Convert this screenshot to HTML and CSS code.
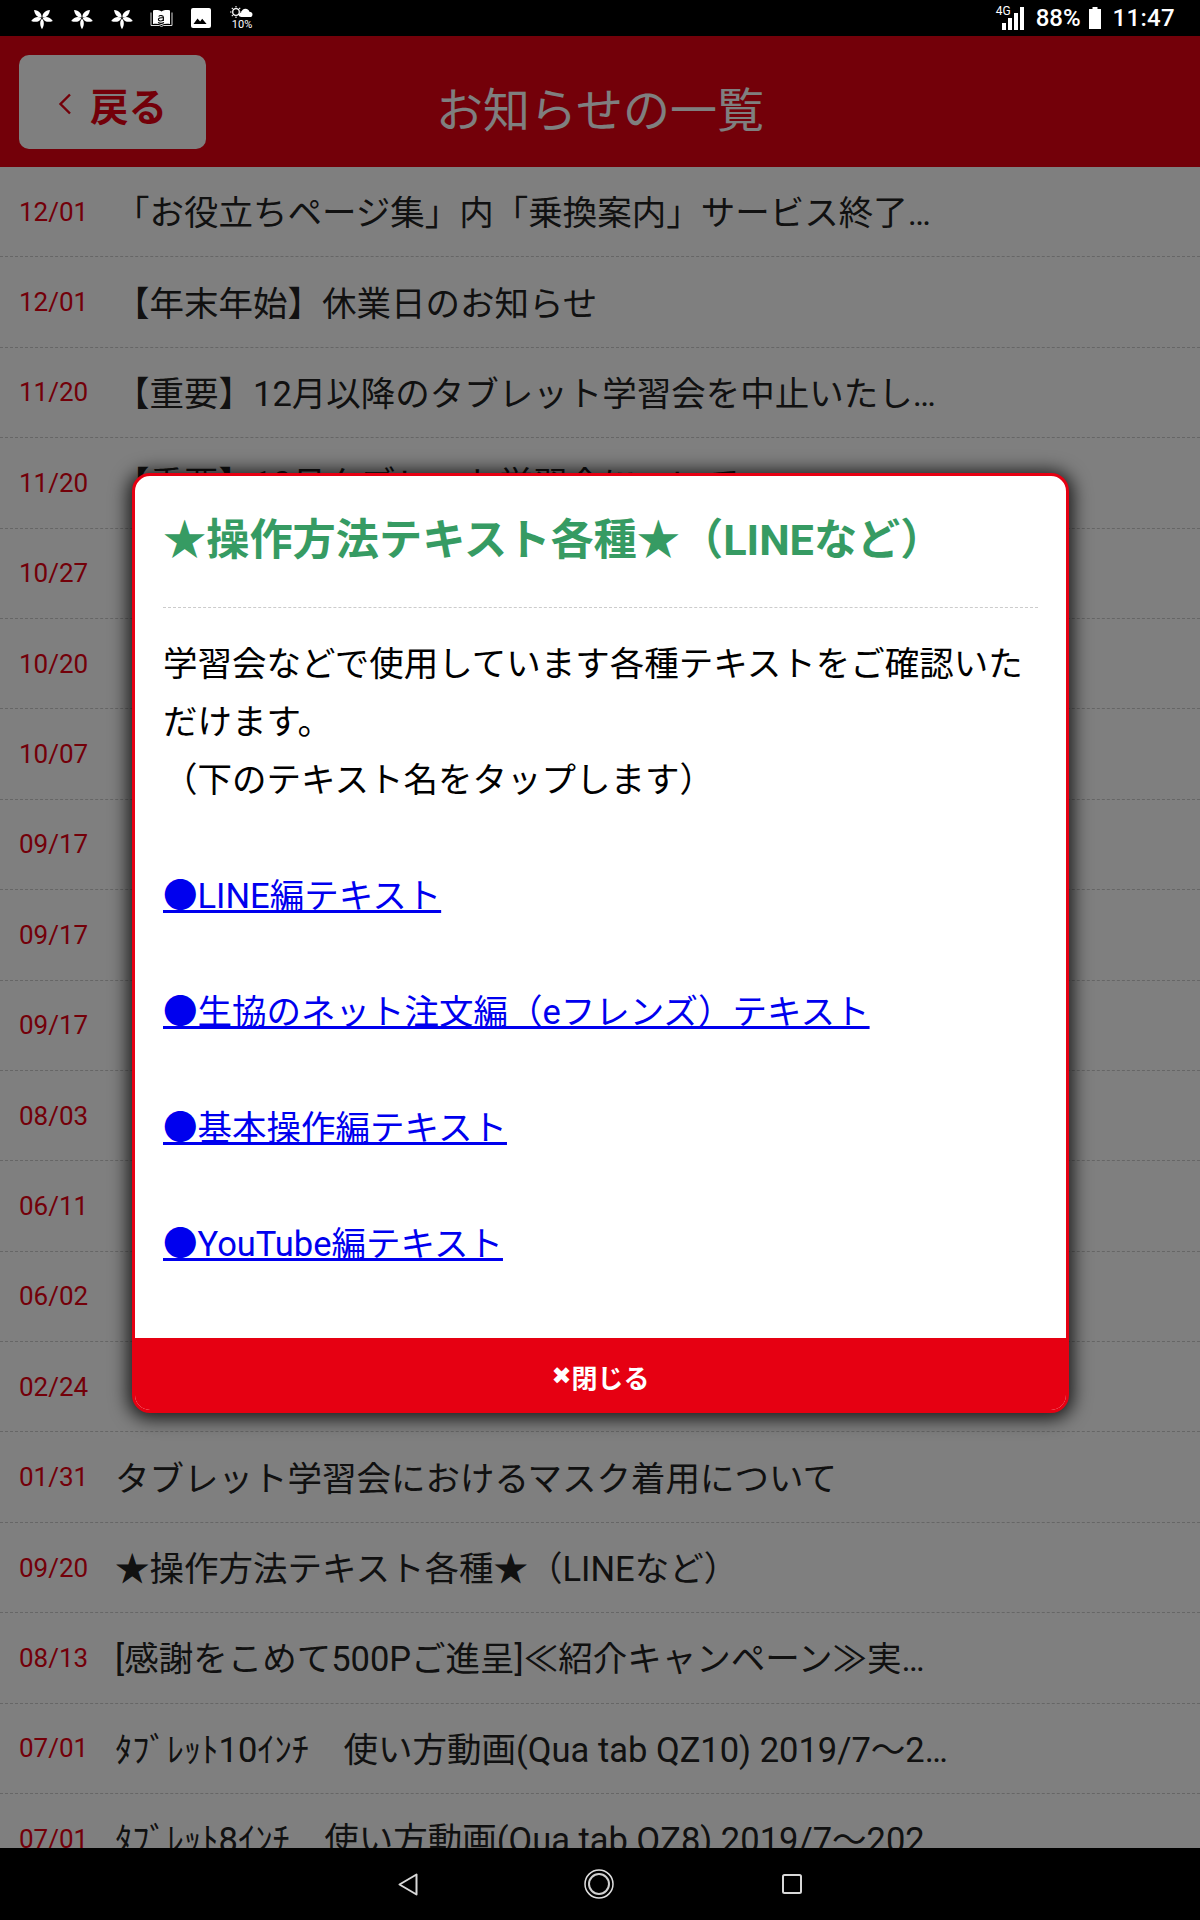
FILE: index.html
```html
<!DOCTYPE html>
<html lang="ja">
<head>
<meta charset="utf-8">
<title>お知らせの一覧</title>
<link rel="stylesheet" href="styles.css">
</head>
<body>
<div class="app">
  <svg class="defs" width="0" height="0">
    <defs>
      <g id="flower-shape" fill="#fff">
        <path id="petal" d="M12 11.300C9 9 9 4.500 12 .8c3 3.700 3 8.200 0 10.500z" transform="rotate(-45 12 12)"/>
        <path d="M12 11.300C9 9 9 4.500 12 .8c3 3.700 3 8.200 0 10.500z" transform="rotate(45 12 12)"/>
        <path d="M12 11.300C9 9 9 4.500 12 .8c3 3.700 3 8.200 0 10.500z" transform="rotate(105 12 12)"/>
        <path d="M12 11.300C9.600 9 9.600 4.500 12 .8c2.400 3.700 2.400 8.200 0 10.500z" transform="rotate(180 12 12)"/>
        <path d="M12 11.300C9 9 9 4.500 12 .8c3 3.700 3 8.200 0 10.500z" transform="rotate(255 12 12)"/>
      </g>
    </defs>
  </svg>
  <div class="statusbar">
    <div class="status-left">
      <svg class="flower" viewBox="0 0 24 24"><use href="#flower-shape"/></svg>
      <svg class="flower" viewBox="0 0 24 24"><use href="#flower-shape"/></svg>
      <svg class="flower" viewBox="0 0 24 24"><use href="#flower-shape"/></svg>
      <svg class="book" viewBox="0 0 23 20"><path d="M1 4.500V17.500h8.500l2 1 2-1H22V4.500" fill="none" stroke="#ddd" stroke-width="1"/><path d="M3 2.500c3-.8 6-.5 8.500 1 2.500-1.500 5.500-1.800 8.500-1V16c-3-.6-6-.3-8.500 1-2.500-1.300-5.500-1.600-8.500-1z" fill="#fff"/><path d="M8.600 8.500c1.200-1.400 4.800-1.300 4.800.8v3.700M13.300 9.800c-3-.3-4.900.3-4.900 1.800 0 1.800 3.400 1.900 4.900 0M8 14.600c1.800.9 4.400.9 6-.1" fill="none" stroke="#000" stroke-width="1.100"/></svg>
      <svg class="picture" viewBox="0 0 20 20"><rect width="20" height="20" rx="2" fill="#fff"/><path d="M2.500 16l4-5.500 2.600 3 2.100-2.800 4.400 5.300z" fill="#000"/></svg>
      <div class="weather">
        <svg class="weather-icon" viewBox="0 0 24 12"><circle cx="6" cy="6" r="3.300" fill="none" stroke="#fff" stroke-width="1.300"/><path d="M6 0v1.500M6 10.500V12M0 6h1.500M10.500 6H12M1.800 1.800l1 1M9.200 9.200l1 1M1.800 10.200l1-1M9.200 2.800l1-1" stroke="#fff" stroke-width="1.100"/><path d="M11.500 11c-1.700 0-2.500-1-2.500-2.200s1-2.200 2.300-2.200c.3-2.400 2-3.900 4.200-3.900 2.100 0 3.500 1.400 3.900 3 1.800 0 3.100 1.100 3.100 2.700S21.400 11 20 11z" fill="#fff"/></svg>
        <span class="weather-text">10%</span>
      </div>
    </div>
    <div class="status-right">
      <div class="signal">
        <span class="network">4G</span>
        <svg class="bars" viewBox="0 0 23 23"><path d="M1 16h4v7H1zM7 11h4v12H7zM13 6h4v17h-4zM19 0h4v23h-4z" fill="#fff"/></svg>
      </div>
      <span class="battery-text">88%</span>
      <svg class="battery" viewBox="0 0 12 22"><path d="M3.500 0h5v2H12v20H0V2h3.500z" fill="#fff"/></svg>
      <span class="clock">11:47</span>
    </div>
  </div>

  <div class="screen">
    <header class="header">
      <div class="header-side">
        <a class="back">
          <svg class="chevron" viewBox="0 0 14 22"><path d="M12 1.500L2.500 11 12 20.500" fill="none" stroke="#e60012" stroke-width="2.400"/></svg>
          <span>戻る</span>
        </a>
      </div>
      <h1 class="header-title">お知らせの一覧</h1>
      <div class="header-side"></div>
    </header>

    <ul class="list">
      <li class="row"><span class="date">12/01</span><span class="subject">「お役立ちページ集」内「乗換案内」サービス終了のお知らせ</span></li>
      <li class="row"><span class="date">12/01</span><span class="subject">【年末年始】休業日のお知らせ</span></li>
      <li class="row"><span class="date">11/20</span><span class="subject">【重要】12月以降のタブレット学習会を中止いたします</span></li>
      <li class="row"><span class="date">11/20</span><span class="subject">【重要】10月タブレット学習会について</span></li>
      <li class="row"><span class="date">10/27</span></li>
      <li class="row"><span class="date">10/20</span></li>
      <li class="row"><span class="date">10/07</span></li>
      <li class="row"><span class="date">09/17</span></li>
      <li class="row"><span class="date">09/17</span></li>
      <li class="row"><span class="date">09/17</span></li>
      <li class="row"><span class="date">08/03</span></li>
      <li class="row"><span class="date">06/11</span></li>
      <li class="row"><span class="date">06/02</span></li>
      <li class="row"><span class="date">02/24</span></li>
      <li class="row"><span class="date">01/31</span><span class="subject">タブレット学習会におけるマスク着用について</span></li>
      <li class="row"><span class="date">09/20</span><span class="subject">★操作方法テキスト各種★（LINEなど）</span></li>
      <li class="row"><span class="date">08/13</span><span class="subject">[感謝をこめて500Pご進呈]≪紹介キャンペーン≫実施中のお知らせ</span></li>
      <li class="row"><span class="date">07/01</span><span class="subject">ﾀﾌﾞﾚｯﾄ10ｲﾝﾁ　使い方動画(Qua tab QZ10) 2019/7～2020/6</span></li>
      <li class="row"><span class="date">07/01</span><span class="subject">ﾀﾌﾞﾚｯﾄ8ｲﾝﾁ　使い方動画(Qua tab QZ8) 2019/7～2020/6</span></li>
    </ul>

    <div class="overlay"></div>

    <div class="modal">
      <div class="modal-body">
        <h2 class="modal-title">★操作方法テキスト各種★（LINEなど）</h2>
        <div class="modal-text">
          <p>学習会などで使用しています各種テキストをご確認いただけます。<br>（下のテキスト名をタップします）</p>
          <p><a class="link">●LINE編テキスト</a></p>
          <p><a class="link">●生協のネット注文編（eフレンズ）テキスト</a></p>
          <p><a class="link">●基本操作編テキスト</a></p>
          <p><a class="link">●YouTube編テキスト</a></p>
        </div>
      </div>
      <div class="modal-close"><span class="close-x">✖</span>閉じる</div>
    </div>
  </div>

  <nav class="navbar">
    <svg class="nav-back" viewBox="0 0 20 23"><path d="M18.500 1.500v20L1.500 11.500z" fill="none" stroke="#d8d8d8" stroke-width="2" stroke-linejoin="round"/></svg>
    <svg class="nav-home" viewBox="0 0 30 30"><circle cx="15" cy="15" r="14" fill="none" stroke="#e0e0e0" stroke-width="1.500"/><circle cx="15" cy="15" r="10" fill="none" stroke="#d0d0d0" stroke-width="2"/></svg>
    <svg class="nav-square" viewBox="0 0 20 20"><rect x="1" y="1" width="18" height="18" rx="1.500" fill="none" stroke="#d8d8d8" stroke-width="2"/></svg>
  </nav>
</div>
</body>
</html>
```

FILE: styles.css
```css
* { box-sizing: border-box; }

html, body {
  margin: 0;
  padding: 0;
  background: #000;
}

body {
  font-family: Roboto, "Noto Sans CJK JP", sans-serif;
}

.app {
  width: 1200px;
  height: 1920px;
  display: flex;
  flex-direction: column;
  overflow: hidden;
}

.defs {
  display: block;
  height: 0;
  flex: none;
}

/* Status bar */
.statusbar {
  height: 36px;
  flex: none;
  background: #000;
  color: #fff;
  display: flex;
  justify-content: space-between;
  align-items: center;
  padding: 0 25px 0 30px;
}

.status-left {
  display: flex;
  align-items: center;
}

.flower {
  width: 24px;
  height: 24px;
  margin-right: 16px;
}

.book {
  width: 23px;
  height: 20px;
  margin-right: 18px;
}

.picture {
  width: 20px;
  height: 20px;
  margin-right: 19px;
}

.weather {
  display: flex;
  flex-direction: column;
  align-items: center;
  width: 24px;
}

.weather-icon {
  width: 24px;
  height: 12px;
  display: block;
}

.weather-text {
  font-size: 11px;
  line-height: 13px;
}

.status-right {
  display: flex;
  align-items: center;
}

.signal {
  position: relative;
  width: 23px;
  height: 23px;
  margin-right: 12px;
}

.bars {
  display: block;
  width: 23px;
  height: 23px;
}

.network {
  position: absolute;
  left: -5px;
  top: -2px;
  font-size: 12px;
  line-height: 13px;
}

.battery-text {
  font-size: 24px;
  font-weight: 500;
  margin-right: 8px;
}

.battery {
  width: 12px;
  height: 22px;
  margin-right: 12px;
}

.clock {
  font-size: 24px;
  font-weight: 500;
  letter-spacing: .3px;
}

/* Screen */
.screen {
  position: relative;
  flex: 1;
  min-height: 0;
  background: #fff;
  overflow: hidden;
}

.header {
  height: 131px;
  background: #e60012;
  display: grid;
  grid-template-columns: 1fr auto 1fr;
  align-items: center;
  padding: 0 19px;
}

.back {
  width: 187px;
  height: 94px;
  margin-top: 1px;
  background: #fff;
  border-radius: 10px;
  color: #e60012;
  font-size: 38.5px;
  font-weight: 700;
  display: flex;
  align-items: center;
  justify-content: center;
  gap: 18px;
}

.back span {
  padding-top: 3px;
}

.chevron {
  width: 14px;
  height: 22px;
  margin-top: 3px;
}

.header-title {
  margin: 18px 0 0;
  color: #fff;
  font-size: 47px;
  font-weight: 400;
  line-height: 1;
}

.list {
  list-style: none;
  margin: 0;
  padding: 0;
}

.row {
  height: 90.4px;
  display: flex;
  align-items: center;
  padding: 0 247px 0 19px;
  border-bottom: 1px dashed #ccc;
}

.date {
  flex: none;
  width: 96px;
  color: #e60012;
  font-size: 26px;
}

.subject {
  flex: 1;
  min-width: 0;
  padding-bottom: 3px;
  color: #222;
  font-size: 34.5px;
  white-space: nowrap;
  overflow: hidden;
  text-overflow: ellipsis;
}

.overlay {
  position: absolute;
  inset: 0;
  background: rgba(0, 0, 0, .5);
}

/* Modal */
.modal {
  position: absolute;
  left: 132px;
  top: 437px;
  width: 937px;
  height: 940px;
  background: #fff;
  border: 3px solid #e60012;
  border-radius: 18px;
  box-shadow: 0 2px 18px 4px rgba(0, 0, 0, .8);
  display: flex;
  flex-direction: column;
  overflow: hidden;
}

.modal-body {
  flex: 1;
  padding: 0 28px;
}

.modal-title {
  margin: 0;
  height: 132px;
  padding-top: 34px;
  border-bottom: 1px dashed #ccc;
  color: #369b63;
  font-size: 43.2px;
  font-weight: 700;
  line-height: 62px;
}

.modal-text {
  padding-top: 27px;
  color: #000;
  font-size: 34.5px;
  line-height: 58px;
}

.modal-text p {
  margin: 0 0 58px;
}

.link {
  color: #0000ee;
  text-decoration: underline;
}

.modal-close {
  height: 72px;
  flex: none;
  padding-top: 4px;
  background: #e60012;
  color: #fff;
  font-size: 26px;
  font-weight: 700;
  display: flex;
  align-items: center;
  justify-content: center;
}

.close-x {
  font-family: "DejaVu Sans", sans-serif;
  font-size: 24px;
}

/* Navigation bar */
.navbar {
  height: 72px;
  flex: none;
  background: #000;
  position: relative;
  display: flex;
  align-items: center;
  padding-left: 398px;
}

.nav-back {
  width: 20px;
  height: 23px;
  margin-right: 166px;
}

.nav-home {
  width: 30px;
  height: 30px;
  margin-right: 168px;
}

.nav-square {
  width: 20px;
  height: 20px;
}
```
